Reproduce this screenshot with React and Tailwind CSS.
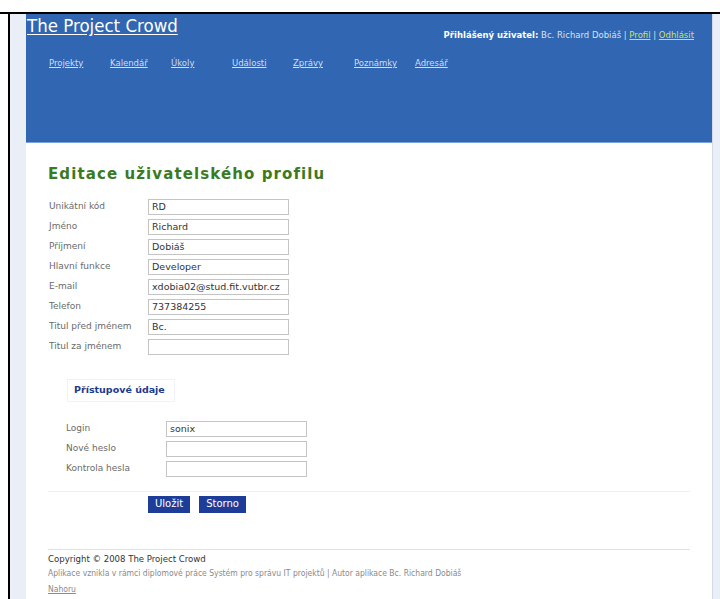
import React from 'react';

const navItems = ['Projekty', 'Kalendář', 'Úkoly', 'Události', 'Zprávy', 'Poznámky', 'Adresář'];

const profileFields = [
    ['Unikátní kód', 'RD'],
    ['Jméno', 'Richard'],
    ['Příjmení', 'Dobiáš'],
    ['Hlavní funkce', 'Developer'],
    ['E-mail', 'xdobia02@stud.fit.vutbr.cz'],
    ['Telefon', '737384255'],
    ['Titul před jménem', 'Bc.'],
    ['Titul za jménem', ''],
];

const loginFields = [
    ['Login', 'sonix'],
    ['Nové heslo', ''],
    ['Kontrola hesla', ''],
];

const Field = ({ label, value, labelWidth }) => (
    <div className="flex items-center h-[20px]">
        <span className={`${labelWidth} text-[9px] text-[#6a6a6a]`}>{label}</span>
        <div className="w-[141px] h-[16px] border border-[#c4c4c4] bg-white px-[3px] flex items-center text-[9.5px] text-[#333] leading-none whitespace-nowrap overflow-hidden">
            {value}
        </div>
    </div>
);

const App = () => {
    return (
        <div className="w-[720px] h-[599px] overflow-hidden bg-white pt-[12px] font-['DejaVu_Sans',sans-serif]">
            <div className="h-full border-t-2 border-black pl-[8px]">
                <div className="h-full flex border-l-2 border-black">
                    <div className="w-[16px] shrink-0 bg-[#e9eef7]" />

                    <div className="w-[686px] shrink-0 flex flex-col">
                        <header className="h-[129px] shrink-0 bg-[#3066b2] border-b border-[#7aa3dc] flex flex-col">
                            <div className="flex justify-between items-start">
                                <a className="font-['DejaVu_Sans_Condensed','DejaVu_Sans',sans-serif] text-[18.5px] leading-[22px] text-white underline underline-offset-2 pl-[1px] pt-[1px]">
                                    The Project Crowd
                                </a>
                                <div className="mt-[15px] mr-[18px] text-[8.5px] text-[#d7e2f2] whitespace-nowrap">
                                    <span className="font-bold text-white">Přihlášený uživatel:</span> Bc. Richard Dobiáš |{' '}
                                    <a className="text-[#d4e157] underline">Profil</a> |{' '}
                                    <a className="text-[#d4e157] underline">Odhlásit</a>
                                </div>
                            </div>
                            <nav className="flex pl-[23px] mt-[15px]">
                                {navItems.map((item) => (
                                    <a key={item} className="w-[61px] text-[8.5px] text-[#d0def2] underline">
                                        {item}
                                    </a>
                                ))}
                            </nav>
                        </header>

                        <main className="flex-1 px-[22px] pt-[20px]">
                            <h1 className="text-[15px] font-bold tracking-[1.1px] text-[#3b7a1f] mb-[11px]">
                                Editace uživatelského profilu
                            </h1>

                            <div className="flex flex-col pl-[1px]">
                                {profileFields.map(([label, value]) => (
                                    <Field key={label} label={label} value={value} labelWidth="w-[99px]" />
                                ))}
                            </div>

                            <div className="ml-[19px] mt-[22px] w-[108px] h-[23px] border border-[#f0f2f7] flex items-center pl-[6px] text-[9.5px] font-bold text-[#1b3b8c]">
                                Přístupové údaje
                            </div>

                            <div className="flex flex-col pl-[18px] mt-[17px]">
                                {loginFields.map(([label, value]) => (
                                    <Field key={label} label={label} value={value} labelWidth="w-[100px]" />
                                ))}
                            </div>

                            <div className="border-t border-[#eef0f6] mt-[12px] w-[642px]" />

                            <div className="flex gap-[9px] pl-[100px] mt-[4px]">
                                <button className="h-[17px] px-[7px] bg-[#1d3d99] text-white text-[10px] leading-none">Uložit</button>
                                <button className="h-[17px] px-[7px] bg-[#1d3d99] text-white text-[10px] leading-none">Storno</button>
                            </div>

                            <footer className="mt-[36px] w-[642px] border-t border-[#e3e3e3] pt-[2px] font-['DejaVu_Sans_Condensed','DejaVu_Sans',sans-serif]">
                                <p className="text-[9.5px] text-[#333] leading-[14px]">Copyright © 2008 The Project Crowd</p>
                                <p className="text-[8.5px] text-[#8a8a8a] leading-[15px]">
                                    Aplikace vznikla v rámci diplomové práce Systém pro správu IT projektů | Autor aplikace Bc. Richard Dobiáš
                                </p>
                                <p className="text-[8.5px] leading-[16px]">
                                    <a className="text-[#8a8a8a] underline">Nahoru</a>
                                </p>
                            </footer>
                        </main>
                    </div>

                    <div className="flex-1 bg-[#e9eef7] border-l border-[#d5dbe6]" />
                </div>
            </div>
        </div>
    );
};

export default App;
